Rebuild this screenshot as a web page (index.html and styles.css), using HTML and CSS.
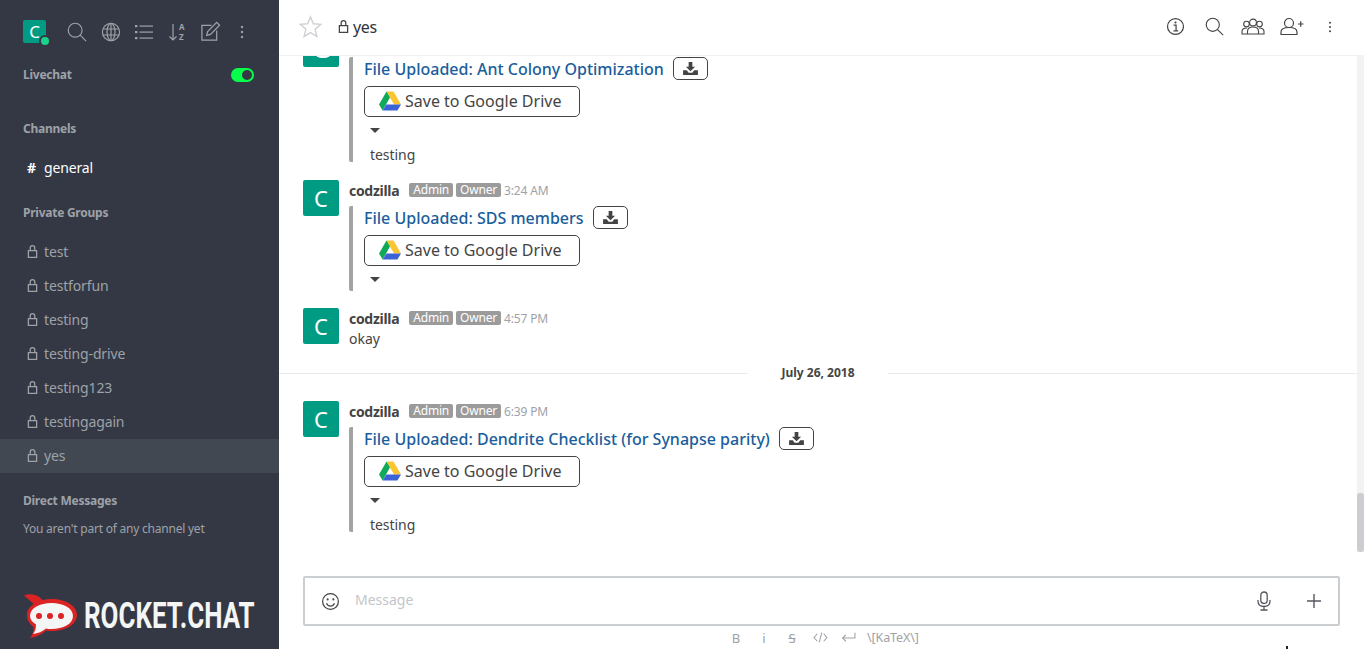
FILE: index.html
```html
<!DOCTYPE html>
<html lang="en">
<head>
<meta charset="utf-8">
<title>yes</title>
<link rel="stylesheet" href="styles.css">
</head>
<body>
<svg class="defs" width="0" height="0" aria-hidden="true">
  <symbol id="i-lock" viewBox="0 0 12 16"><path d="M1.500 7h9v7.500h-9zM3.500 7V4a2.500 2.500 0 0 1 5 0v3" fill="none" stroke="currentColor" stroke-width="1.400"/></symbol>
  <symbol id="i-search" viewBox="0 0 22 22"><circle cx="9" cy="9" r="7.600" fill="none" stroke="currentColor" stroke-width="1.300"/><path d="M14.500 14.500l6.500 6.500" stroke="currentColor" stroke-width="1.300"/></symbol>
  <symbol id="i-kebab" viewBox="0 0 4 14"><circle cx="2" cy="2" r="1.200" fill="currentColor"/><circle cx="2" cy="7" r="1.200" fill="currentColor"/><circle cx="2" cy="12" r="1.200" fill="currentColor"/></symbol>
  <symbol id="i-dl" viewBox="0 0 16 14"><path d="M6 0h4v5h3L8 10 3 5h3zM0 9h4l2 2.500h4L12 9h4v5H0z" fill="currentColor"/></symbol>
  <symbol id="i-drive" viewBox="0 0 22 20"><path d="M7.500 0.500h7L22 13.500h-7z" fill="#fbc531"/><path d="M7.500 0.500L0 13.500l3.600 6L11 6.500z" fill="#10a957"/><path d="M3.600 19.500L7.300 13.500H22l-3.600 6z" fill="#3d62d6"/></symbol>
</svg>
<div class="app">
  <aside class="sidebar">
    <div class="side-top">
      <div class="me">C<span class="me-dot"></span></div>
      <div class="side-tools">
        <svg class="t-ic" viewBox="0 0 22 22"><use href="#i-search"/></svg>
        <svg class="t-ic" viewBox="0 0 20 20"><g fill="none" stroke="currentColor" stroke-width="1.200"><circle cx="10" cy="10" r="8.600"/><ellipse cx="10" cy="10" rx="4" ry="8.600"/><path d="M10 1.400v17.200M2 7h16M2 13h16"/></g></svg>
        <svg class="t-ic" viewBox="0 0 20 20"><g fill="currentColor"><rect x="1" y="3" width="2.400" height="2.200"/><rect x="1" y="9" width="2.400" height="2.200"/><rect x="1" y="15" width="2.400" height="2.200"/><rect x="5.500" y="3.500" width="13.500" height="1.200"/><rect x="5.500" y="9.500" width="13.500" height="1.200"/><rect x="5.500" y="15.500" width="13.500" height="1.200"/></g></svg>
        <svg class="t-ic" viewBox="0 0 20 20"><path d="M5 2v16M1.500 14.500L5 18l3.500-3.500" fill="none" stroke="currentColor" stroke-width="1.200"/><text x="11" y="8" class="az">A</text><text x="11" y="18" class="az">Z</text></svg>
        <svg class="t-ic t-edit" viewBox="0 0 22 22"><path d="M12 4.500H2v15.500h15.500V10" fill="none" stroke="currentColor" stroke-width="1.300"/><path d="M7 15l1-4L17.500 1.500l3 3L11 14z" fill="none" stroke="currentColor" stroke-width="1.300"/></svg>
        <svg class="t-kebab"><use href="#i-kebab"/></svg>
      </div>
    </div>
    <div class="live">
      <span class="sec-label">Livechat</span>
      <span class="toggle"><span class="knob"></span></span>
    </div>
    <div class="sec-label sec-channels">Channels</div>
    <div class="row row-general"><span class="hash">#</span>general</div>
    <div class="sec-label sec-private">Private Groups</div>
    <div class="rows">
      <div class="row"><svg class="lock"><use href="#i-lock"/></svg>test</div>
      <div class="row"><svg class="lock"><use href="#i-lock"/></svg>testforfun</div>
      <div class="row"><svg class="lock"><use href="#i-lock"/></svg>testing</div>
      <div class="row"><svg class="lock"><use href="#i-lock"/></svg>testing-drive</div>
      <div class="row"><svg class="lock"><use href="#i-lock"/></svg>testing123</div>
      <div class="row"><svg class="lock"><use href="#i-lock"/></svg>testingagain</div>
      <div class="row row-active"><svg class="lock"><use href="#i-lock"/></svg>yes</div>
    </div>
    <div class="sec-label sec-direct">Direct Messages</div>
    <div class="empty">You aren't part of any channel yet</div>
    <div class="logo">
      <svg class="logo-ic" viewBox="0 0 54 46">
        <path d="M1 2.500C8 0 15 1.500 20.500 8L12 12z" fill="#db2323"/>
        <path d="M29 6c14 0 25 7 25 16s-11 16-25 16c-2 0-4 0-6-.5C19 41 14 44 7 45c2.500-3 3.500-6 3.500-11C6.500 31 4 27 4 22 4 13 15 6 29 6z" fill="#db2323"/>
        <path d="M28.500 10C40 10 50 15 50 23s-10 13-21.500 13c-2 0-4 0-5.500-.5C19.500 38.500 15 40.500 10 41c2-2.500 3-5 3-9.500C9.500 29.500 7 26.500 7 23c0-8 10-13 21.500-13z" fill="#f4f5f5"/>
        <circle cx="16" cy="23" r="3" fill="#db2323"/><circle cx="27" cy="23" r="3" fill="#db2323"/><circle cx="38" cy="23" r="3" fill="#db2323"/>
      </svg>
      <span class="logo-text">ROCKET.CHAT</span>
    </div>
  </aside>
  <main class="main">
    <header class="head">
      <svg class="star" viewBox="0 0 24 24"><path d="M12 2l3 7.200 7.600.6-5.800 5 1.800 7.500L12 18.300l-6.600 4 1.800-7.500-5.800-5 7.600-.6z" fill="none" stroke="#cfd1d4" stroke-width="1.500"/></svg>
      <svg class="head-lock"><use href="#i-lock"/></svg>
      <span class="room">yes</span>
      <div class="head-tools">
        <svg class="h-ic" viewBox="0 0 20 20"><circle cx="10" cy="10" r="8.400" fill="none" stroke="currentColor" stroke-width="1.300"/><circle cx="10" cy="5.800" r="1.100" fill="currentColor"/><path d="M8 8.500h2.600v6M7.800 14.700h5" fill="none" stroke="currentColor" stroke-width="1.300"/></svg>
        <svg class="h-ic h-search" viewBox="0 0 22 22"><use href="#i-search"/></svg>
        <svg class="h-ic h-team" viewBox="0 0 24 18"><g fill="none" stroke="currentColor" stroke-width="1.100"><circle cx="12" cy="5" r="3.400"/><circle cx="5.500" cy="6.500" r="2.800"/><circle cx="18.500" cy="6.500" r="2.800"/><path d="M6.500 16.500v-2.500c0-3 2.500-4.500 5.500-4.500s5.500 1.500 5.500 4.500v2.500zM6 10.500c-3 0-5 1-5 3.500v2.500h5.500M18 10.500c3 0 5 1 5 3.500v2.500h-5.500"/></g></svg>
        <svg class="h-ic h-add" viewBox="0 0 24 18"><g fill="none" stroke="currentColor" stroke-width="1.200"><circle cx="9" cy="5.500" r="4.500"/><path d="M1 17v-2.500C1 11.500 4 10 9 10s8 1.500 8 4.500V17zM18 6.500h5.500M20.750 3.750v5.500"/></g></svg>
        <svg class="h-kebab"><use href="#i-kebab"/></svg>
      </div>
    </header>
    <section class="list">
      <article class="msg">
        <div class="avatar avatar-clipped"></div>
        <div class="body">
          <div class="meta"></div>
          <div class="attach">
            <div class="title-row"><a class="title">File Uploaded: Ant Colony Optimization</a><span class="dl"><svg class="dl-ic"><use href="#i-dl"/></svg></span></div>
            <div class="drive"><svg class="drive-ic"><use href="#i-drive"/></svg><span class="drive-text">Save to Google Drive</span></div>
            <div class="caret-row"><span class="caret"></span></div>
            <div class="desc">testing</div>
          </div>
        </div>
      </article>
      <article class="msg">
        <div class="avatar">C</div>
        <div class="body">
          <div class="meta"><b class="name">codzilla</b><span class="tag tag-first">Admin</span><span class="tag">Owner</span><span class="time">3:24 AM</span></div>
          <div class="attach">
            <div class="title-row"><a class="title">File Uploaded: SDS members</a><span class="dl"><svg class="dl-ic"><use href="#i-dl"/></svg></span></div>
            <div class="drive"><svg class="drive-ic"><use href="#i-drive"/></svg><span class="drive-text">Save to Google Drive</span></div>
            <div class="caret-row"><span class="caret"></span></div>
          </div>
        </div>
      </article>
      <article class="msg msg-plain">
        <div class="avatar">C</div>
        <div class="body">
          <div class="meta"><b class="name">codzilla</b><span class="tag tag-first">Admin</span><span class="tag">Owner</span><span class="time">4:57 PM</span></div>
          <div class="text">okay</div>
        </div>
      </article>
      <div class="day"><span class="day-label">July 26, 2018</span></div>
      <article class="msg msg-after-day">
        <div class="avatar">C</div>
        <div class="body">
          <div class="meta"><b class="name">codzilla</b><span class="tag tag-first">Admin</span><span class="tag">Owner</span><span class="time">6:39 PM</span></div>
          <div class="attach">
            <div class="title-row"><a class="title">File Uploaded: Dendrite Checklist (for Synapse parity)</a><span class="dl"><svg class="dl-ic"><use href="#i-dl"/></svg></span></div>
            <div class="drive"><svg class="drive-ic"><use href="#i-drive"/></svg><span class="drive-text">Save to Google Drive</span></div>
            <div class="caret-row"><span class="caret"></span></div>
            <div class="desc">testing</div>
          </div>
        </div>
      </article>
      <div class="track"><div class="thumb"></div></div>
    </section>
    <footer class="composer">
      <div class="box">
        <svg class="smile" viewBox="0 0 20 20"><g fill="none" stroke="currentColor" stroke-width="1.300"><circle cx="10" cy="10" r="8.300"/><path d="M5.800 11.800c1 2 2.500 3 4.200 3s3.200-1 4.200-3"/></g><circle cx="7" cy="7.800" r="1.100" fill="currentColor"/><circle cx="13" cy="7.800" r="1.100" fill="currentColor"/></svg>
        <span class="placeholder">Message</span>
        <svg class="mic" viewBox="0 0 14 20"><g fill="none" stroke="currentColor" stroke-width="1.300"><rect x="3.800" y="1" width="6.400" height="11.500" rx="3.200"/><path d="M1 9v1c0 3.500 2.500 5.500 6 5.500s6-2 6-5.500V9M7 15.500V19M3.500 19h7"/></g></svg>
        <svg class="plus" viewBox="0 0 14 14"><path d="M7 0v14M0 7h14" stroke="currentColor" stroke-width="1.400"/></svg>
      </div>
      <div class="fmt">
        <span class="f f-b">B</span>
        <span class="f f-i">i</span>
        <span class="f f-s">S</span>
        <svg class="f-ic" viewBox="0 0 14 10"><path d="M4 1.500L1 5l3 3.500M10 1.500L13 5l-3 3.500M8.200.5L5.800 9.500" fill="none" stroke="currentColor" stroke-width="1"/></svg>
        <svg class="f-ic" viewBox="0 0 14 10"><path d="M13 .5v5H1.500M4.500 2.500l-3 3 3 3" fill="none" stroke="currentColor" stroke-width="1"/></svg>
        <span class="katex">\[KaTeX\]</span>
      </div>
    </footer>
  </main>
</div>
<span class="cursor"></span>
</body>
</html>
```
FILE: styles.css
```css
* { box-sizing: border-box; }
html, body { margin: 0; height: 100%; overflow: hidden; }
body { font-family: "Noto Sans", "Open Sans", sans-serif; color: #444; background: #fff; position: relative; }
.defs { position: absolute; }
.app { display: flex; width: 1364px; height: 649px; }
.cursor { position: absolute; left: 1286px; top: 646px; width: 2px; height: 3px; background: #222; }

/* sidebar */
.sidebar { width: 279px; flex: none; background: #343844; color: #9ea2a8; display: flex; flex-direction: column; }
.side-top { display: flex; align-items: center; height: 31px; margin-top: 16px; padding-left: 23px; }
.me { position: relative; width: 23px; height: 23px; background: #009b83; color: #fff; border-radius: 2px; font-size: 17px; line-height: 23px; text-align: center; }
.me-dot { position: absolute; right: -3px; bottom: -2px; width: 8px; height: 8px; border-radius: 50%; background: #19d38a; box-shadow: 0 0 0 2px #343844; }
.side-tools { display: flex; align-items: center; margin-left: 21px; }
.t-ic { width: 20px; height: 20px; margin-right: 13.500px; color: #9ea2a8; }
.t-edit { width: 21px; height: 21px; margin-left: -1px; }
.t-kebab { width: 4px; height: 14px; margin-left: 5px; color: #9ea2a8; }
.az { font-size: 8px; font-weight: 700; fill: currentColor; font-family: "Noto Sans", sans-serif; }
.live { display: flex; align-items: center; justify-content: space-between; height: 20px; margin-top: 18px; padding: 0 25px 0 23px; }
.sec-label { font-size: 12px; font-weight: 700; color: #9ea2a8; line-height: 20px; letter-spacing: -.25px; }
.toggle { display: block; position: relative; width: 23px; height: 14px; border-radius: 7px; background: #06ff4a; }
.knob { position: absolute; right: 2px; top: 2px; width: 10px; height: 10px; border-radius: 50%; background: #343844; }
.sec-channels { padding-left: 23px; margin-top: 34px; }
.row { display: flex; align-items: center; height: 34px; padding-left: 27px; padding-bottom: 2px; font-size: 14px; letter-spacing: -.15px; color: #9ea2a8; }
.row-general { margin-top: 12px; color: #fff; }
.hash { width: 17px; font-size: 14px; font-weight: 700; }
.sec-private { padding-left: 23px; margin-top: 18px; }
.rows { margin-top: 12px; }
.lock { width: 11px; height: 15px; margin-right: 6px; color: #9ea2a8; }
.row-active { background: #414852; }
.sec-direct { padding-left: 23px; margin-top: 18px; }
.empty { padding-left: 23px; font-size: 12px; letter-spacing: -.22px; line-height: 20px; margin-top: 8px; color: #9ea2a8; }
.logo { display: flex; align-items: center; margin-top: auto; margin-bottom: 10px; padding-left: 23px; height: 47px; }
.logo-ic { width: 54px; height: 46px; flex: none; }
.logo-text { display: block; margin-left: 7px; font-family: Roboto, sans-serif; font-weight: 700; font-size: 36px; color: #f4f5f5; transform: scaleX(.72); transform-origin: left center; white-space: nowrap; }

/* main */
.main { flex: 1; min-width: 0; display: flex; flex-direction: column; }
.head { height: 56px; flex: none; display: flex; align-items: center; padding: 0 0 2px 20px; border-bottom: 1px solid #f1f2f3; position: relative; z-index: 2; background: #fff; }
.star { width: 23px; height: 23px; }
.head-lock { width: 11px; height: 15px; margin-left: 16px; margin-right: 4px; color: #444; }
.room { font-size: 16px; letter-spacing: -.4px; color: #2f343d; }
.head-tools { display: flex; align-items: center; margin-left: auto; padding-right: 32px; color: #444; }
.h-ic { width: 19px; height: 19px; margin-right: 20px; }
.h-search { margin-right: 17px; }
.h-team { width: 24px; margin-right: 15px; }
.h-add { width: 24px; margin-right: 24px; }
.h-kebab { width: 4px; height: 12px; color: #444; }

.list { flex: 1; min-height: 0; overflow: hidden; display: flex; flex-direction: column; justify-content: flex-end; padding: 0 7px 44px 0; position: relative; }
.msg { display: flex; flex: none; padding-left: 24px; margin-top: 18px; }
.msg-plain { margin-top: 17px; }
.msg-after-day { margin-top: 18px; }
.avatar { width: 36px; height: 36px; flex: none; background: #009b83; color: #fff; border-radius: 2px; font-size: 22px; line-height: 36px; text-align: center; }
.avatar-clipped { position: relative; }
.avatar-clipped::after { content: ""; position: absolute; left: 12px; bottom: 9px; width: 12px; height: 4px; border-radius: 0 0 6px 6px; border: 2px solid #fff; border-top: 0; }
.body { margin-left: 10px; min-width: 0; }
.meta { display: flex; align-items: center; height: 20px; margin-bottom: 6px; }
.name { font-size: 14px; font-weight: 700; letter-spacing: -.3px; color: #444; }
.tag { font-size: 12px; letter-spacing: -.2px; line-height: 14px; padding: 0 4px; background: #9b9b9b; color: #fff; border-radius: 2px; margin-left: 3px; }
.tag-first { margin-left: 10px; }
.time { font-size: 12px; letter-spacing: -.15px; color: #9ea2a8; margin-left: 3px; }
.attach { border-left: 4px solid #a3a3a3; border-radius: 2px; padding-left: 11px; }
.title-row { display: flex; align-items: center; height: 23px; margin-bottom: 6px; }
.title { font-size: 16px; font-weight: 500; color: #1a5e9c; white-space: nowrap; }
.dl { display: flex; align-items: center; justify-content: center; width: 35px; height: 23px; margin-left: 9px; border: 1px solid #444; border-radius: 5px; }
.dl-ic { width: 15px; height: 13px; color: #444; }
.drive { display: flex; align-items: center; width: 216px; height: 31px; border: 1px solid #444; border-radius: 5px; padding-left: 14px; padding-bottom: 2px; font-size: 16px; color: #444; white-space: nowrap; }
.drive-ic { width: 22px; height: 20px; margin-right: 4px; margin-top: 1px; flex: none; }
.caret-row { height: 25px; padding: 2px 0 0 6px; display: flex; align-items: center; }
.caret { width: 0; height: 0; border-left: 5px solid transparent; border-right: 5px solid transparent; border-top: 5px solid #444; }
.desc { height: 20px; padding-left: 6px; font-size: 14px; letter-spacing: -.05px; line-height: 26px; color: #444; }
.text { font-size: 14px; line-height: 20px; margin-top: -5px; height: 20px; color: #444; }
.day { flex: none; height: 20px; margin-top: 14px; display: flex; justify-content: center; align-items: center; position: relative; }
.day::before { content: ""; position: absolute; left: 0; right: 0; top: 10px; height: 1px; background: #eaebec; }
.day-label { position: relative; background: #fff; width: 140px; margin-bottom: 2px; text-align: center; font-size: 12px; font-weight: 700; color: #444; }
.track { position: absolute; top: 0; right: 0; bottom: 24px; width: 7px; background: #f2f2f2; display: flex; flex-direction: column; justify-content: flex-end; }
.thumb { width: 7px; height: 59px; border-radius: 3px; background: #cbcdd0; }

.composer { height: 73px; flex: none; padding: 0 24px; }
.box { display: flex; align-items: center; height: 50px; border: 2px solid #cbced1; border-radius: 2px; padding-left: 16px; }
.smile { width: 19px; height: 19px; color: #444; flex: none; }
.placeholder { margin-left: 15px; margin-bottom: 3px; font-size: 14px; color: #c3c6ca; }
.mic { width: 14px; height: 20px; margin-left: auto; color: #54585e; }
.plus { width: 14px; height: 14px; margin-left: 36px; margin-right: 17px; color: #54585e; }
.fmt { display: flex; align-items: center; height: 23px; padding-left: 419px; color: #9ea2a8; font-size: 13px; }
.f { width: 28px; text-align: center; }
.f-s { text-decoration: line-through; }
.f-ic { width: 15px; height: 11px; margin: 0 6.500px; }
.katex { margin-left: 5px; font-size: 12.500px; letter-spacing: -.1px; }
```
